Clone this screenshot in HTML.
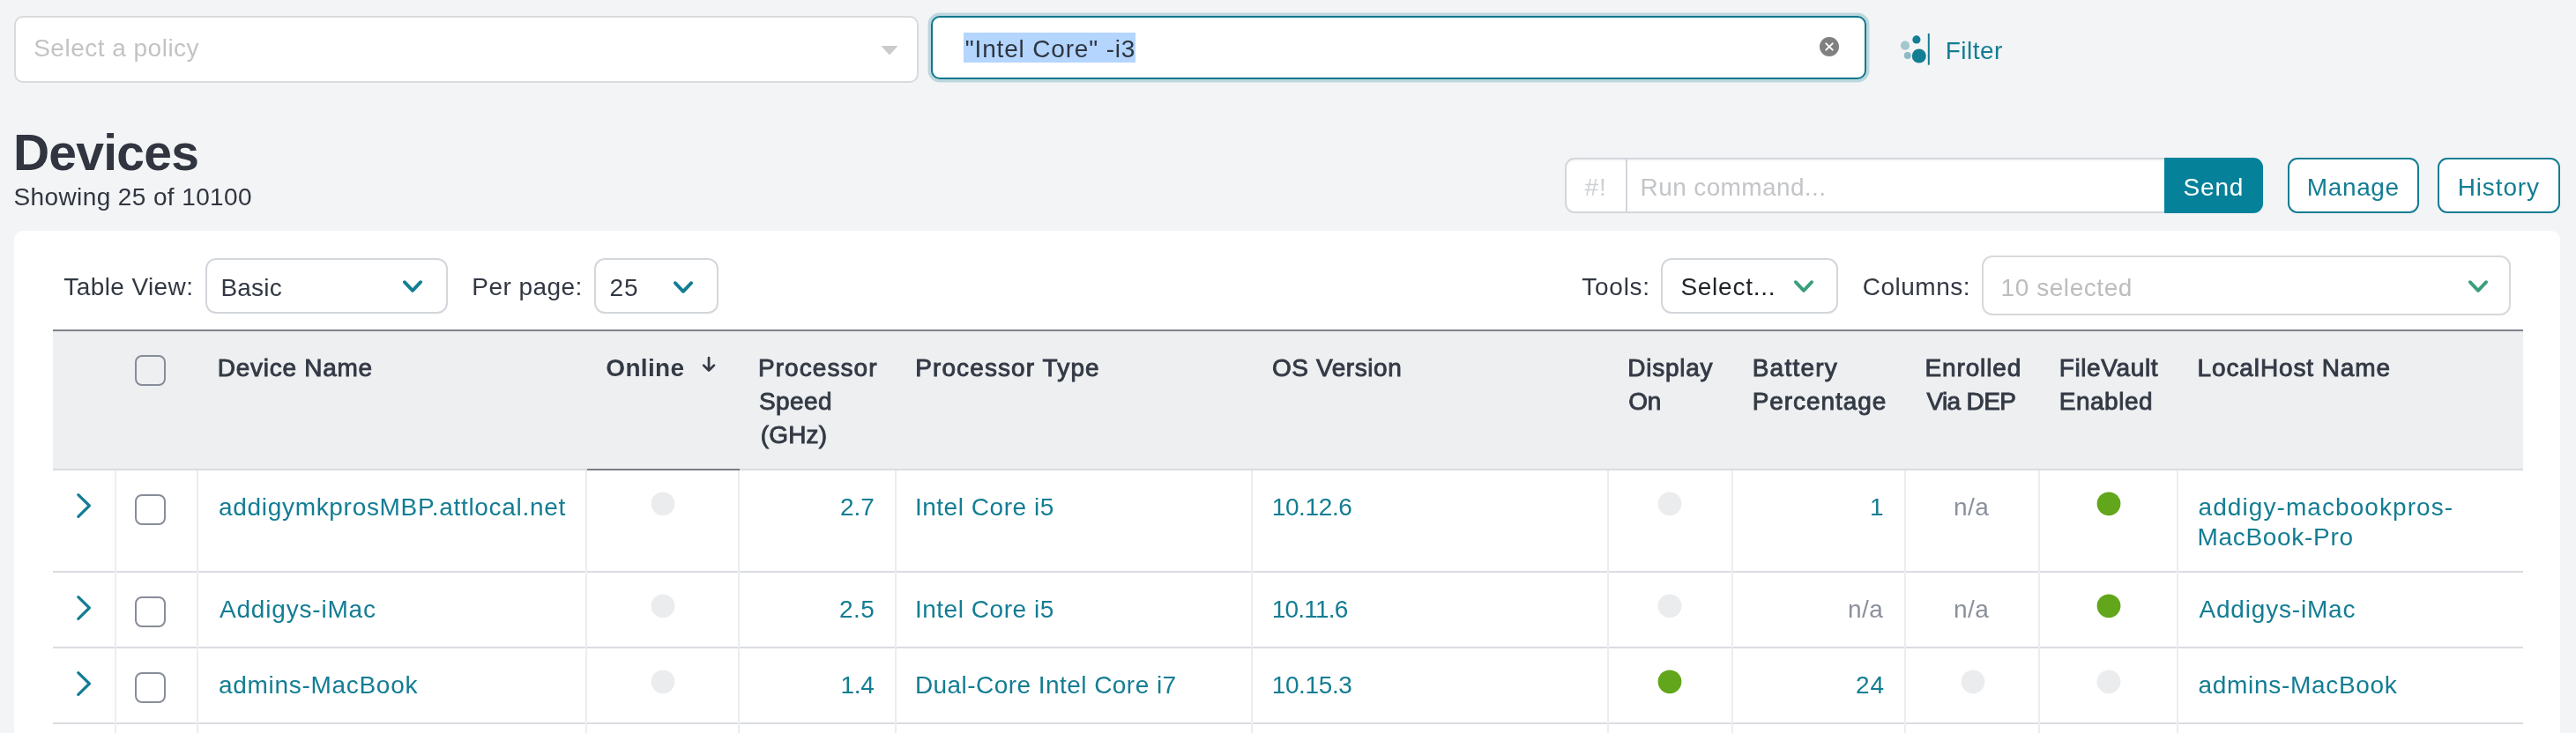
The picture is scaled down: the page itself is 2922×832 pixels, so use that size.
<!DOCTYPE html>
<html><head><meta charset="utf-8"><title>Devices</title>
<style>
*{box-sizing:border-box;margin:0;padding:0}
html,body{width:2922px;height:832px;overflow:hidden;background:#f3f4f6;font-family:"Liberation Sans",sans-serif}
.a{position:absolute}
.t{position:absolute;white-space:pre;line-height:1;font-size:28px}
.sel{position:absolute;background:#fff;border:2px solid #d3d6db;border-radius:12px}
.vs{position:absolute;width:2px;background:#ebedf0;top:534px;height:298px}
.hs{position:absolute;left:60px;width:2802px;height:2px;background:#d9dce0}
.dot{position:absolute;width:27px;height:27px;border-radius:50%;background:#ebecee}
.dot.g{background:#62a61b}
.cb{position:absolute;left:153px;width:35px;height:35px;border:2px solid #878d98;border-radius:8px;background:#fff}
svg{position:absolute;overflow:visible}
#root{position:absolute;left:0;top:0;width:2922px;height:832px;overflow:hidden;will-change:transform}
</style></head>
<body><div id="root">
<div class="a" style="left:16px;top:18px;width:1026px;height:76px;background:#fff;border:2px solid #dadadc;border-radius:10px"></div>
<svg style="left:1000px;top:52px" width="18" height="10" viewBox="0 0 18 10"><path d="M0.9 0 H17.1 Q18.3 0.2 17.5 1.2 L9.7 9.8 Q9 10.5 8.3 9.8 L0.5 1.2 Q-0.3 0.2 0.9 0 Z" fill="#cbcbcb"/></svg>
<div class="a" style="left:1055.5px;top:18px;width:1061px;height:72px;background:#fff;border:2px solid #0c788d;border-radius:10px;box-shadow:0 0 0 3.5px rgba(12,120,141,.23)"></div>
<div class="a" style="left:1093px;top:37px;width:195px;height:34px;background:#b4d5fe"></div>
<svg style="left:2064px;top:42px" width="22" height="22" viewBox="0 0 22 22"><circle cx="11" cy="11" r="11" fill="#808080"/><path d="M7.3 7.3 L14.7 14.7 M14.7 7.3 L7.3 14.7" stroke="#fff" stroke-width="1.9" stroke-linecap="round"/></svg>
<svg style="left:2150px;top:36px" width="44" height="40" viewBox="2150 36 44 40"><circle cx="2161" cy="51.7" r="5.1" fill="#a3c6cf"/><circle cx="2163.8" cy="62.9" r="4" fill="#8fbac5"/><circle cx="2173.9" cy="44.9" r="4.6" fill="#137d93"/><circle cx="2176.8" cy="63.5" r="8" fill="#137d93"/><rect x="2186.8" y="38" width="2" height="35.7" fill="#137d93"/></svg>
<div class="a" style="left:1775px;top:179px;width:692px;height:63px;background:#fff;border:2px solid #d3d6db;border-radius:11px 0 0 11px;box-shadow:inset 0 2px 3px rgba(0,0,0,.04)"></div>
<div class="a" style="left:1844px;top:181px;width:2px;height:59px;background:#d3d6db"></div>
<div class="a" style="left:2455px;top:179px;width:112px;height:63px;background:#06819a;border-radius:0 11px 11px 0"></div>
<div class="a" style="left:2595px;top:179px;width:149px;height:63px;background:#fff;border:2px solid #137d93;border-radius:11px"></div>
<div class="a" style="left:2765px;top:179px;width:139px;height:63px;background:#fff;border:2px solid #137d93;border-radius:11px"></div>
<div class="a" style="left:16px;top:262px;width:2888px;height:570px;background:#fff;border-radius:10px 10px 0 0"></div>
<div class="sel" style="left:233px;top:293px;width:275px;height:63px"></div>
<div class="sel" style="left:674px;top:293px;width:141px;height:63px"></div>
<div class="sel" style="left:1884px;top:293px;width:201px;height:63px"></div>
<div class="sel" style="left:2248px;top:290px;width:600px;height:68px;border-color:#d9d9d9"></div>
<svg style="left:456px;top:317.15px" width="24" height="16" viewBox="-12 -8 24 16"><path d="M-9.15 -4.85 L0 4.85 L9.15 -4.85" fill="none" stroke="#137d93" stroke-width="3.8" stroke-linecap="round" stroke-linejoin="round"/></svg>
<svg style="left:763px;top:317.5px" width="24" height="16" viewBox="-12 -8 24 16"><path d="M-9.15 -4.85 L0 4.85 L9.15 -4.85" fill="none" stroke="#137d93" stroke-width="3.8" stroke-linecap="round" stroke-linejoin="round"/></svg>
<svg style="left:2033.6px;top:317px" width="24" height="16" viewBox="-12 -8 24 16"><path d="M-9.15 -4.85 L0 4.85 L9.15 -4.85" fill="none" stroke="#3a9e7d" stroke-width="3.8" stroke-linecap="round" stroke-linejoin="round"/></svg>
<svg style="left:2799.4px;top:316.7px" width="24" height="16" viewBox="-12 -8 24 16"><path d="M-9.15 -4.85 L0 4.85 L9.15 -4.85" fill="none" stroke="#3a9e7d" stroke-width="3.8" stroke-linecap="round" stroke-linejoin="round"/></svg>
<div class="a" style="left:60px;top:376px;width:2802px;height:156px;background:#edeff1"></div>
<div class="a" style="left:60px;top:374px;width:2802px;height:2px;background:#7c818c"></div>
<div class="hs" style="top:532px"></div>
<div class="hs" style="top:648px"></div>
<div class="hs" style="top:734px"></div>
<div class="hs" style="top:820px"></div>
<div class="a" style="left:666px;top:532px;width:173px;height:2px;background:#787d87"></div>
<div class="vs" style="left:130px"></div>
<div class="vs" style="left:223px"></div>
<div class="vs" style="left:664px"></div>
<div class="vs" style="left:837px"></div>
<div class="vs" style="left:1015px"></div>
<div class="vs" style="left:1419px"></div>
<div class="vs" style="left:1823px"></div>
<div class="vs" style="left:1964px"></div>
<div class="vs" style="left:2160px"></div>
<div class="vs" style="left:2312px"></div>
<div class="vs" style="left:2469px"></div>
<div class="cb" style="top:403px;background:transparent"></div>
<svg style="left:790px;top:400px" width="30" height="30" viewBox="790 400 30 30"><path d="M804.05 406.1 V420.5 M798.1 414.6 L804.05 420.5 L810 414.6" fill="none" stroke="#343a45" stroke-width="2.7" stroke-linecap="round" stroke-linejoin="round"/></svg>
<svg style="left:84px;top:558.3px" width="22" height="32" viewBox="-11 -16 22 32"><path d="M-6.2 -12.4 L6.4 0 L-6.2 12.4" fill="none" stroke="#137d93" stroke-width="3.2" stroke-linecap="round" stroke-linejoin="round"/></svg>
<div class="cb" style="top:561.3px"></div>
<svg style="left:84px;top:674.3px" width="22" height="32" viewBox="-11 -16 22 32"><path d="M-6.2 -12.4 L6.4 0 L-6.2 12.4" fill="none" stroke="#137d93" stroke-width="3.2" stroke-linecap="round" stroke-linejoin="round"/></svg>
<div class="cb" style="top:677.3px"></div>
<svg style="left:84px;top:760.3px" width="22" height="32" viewBox="-11 -16 22 32"><path d="M-6.2 -12.4 L6.4 0 L-6.2 12.4" fill="none" stroke="#137d93" stroke-width="3.2" stroke-linecap="round" stroke-linejoin="round"/></svg>
<div class="cb" style="top:763.3px"></div>
<svg style="left:0;top:0" width="2922" height="832" viewBox="0 0 2922 832"><circle cx="752" cy="571.8" r="13.4" fill="#ebecee"/><circle cx="752" cy="687.8" r="13.4" fill="#ebecee"/><circle cx="752" cy="773.8" r="13.4" fill="#ebecee"/><circle cx="1894" cy="571.8" r="13.4" fill="#ebecee"/><circle cx="1894" cy="687.8" r="13.4" fill="#ebecee"/><circle cx="1894" cy="773.8" r="13.4" fill="#62a61b"/><circle cx="2238" cy="773.8" r="13.4" fill="#ebecee"/><circle cx="2392" cy="571.8" r="13.4" fill="#62a61b"/><circle cx="2392" cy="687.8" r="13.4" fill="#62a61b"/><circle cx="2392" cy="773.8" r="13.4" fill="#ebecee"/></svg>
<span class="t" style="left:38.2px;top:41.2px;font-size:28px;color:#c3c3c4;letter-spacing:0.49px;">Select a policy</span>
<span class="t" style="left:1094.8px;top:41.7px;font-size:28px;color:#2e3540;letter-spacing:0.83px;">&quot;Intel Core&quot; -i3</span>
<span class="t" style="left:2206.8px;top:43.8px;font-size:28px;color:#137d93;letter-spacing:0.44px;">Filter</span>
<span class="t" style="left:14.9px;top:144.8px;font-size:57px;color:#30353f;font-weight:700;letter-spacing:-0.75px;">Devices</span>
<span class="t" style="left:15.5px;top:209.9px;font-size:28px;color:#30353f;letter-spacing:0.39px;">Showing 25 of 10100</span>
<span class="t" style="left:1797.5px;top:199.0px;font-size:28px;color:#cdd0d5;letter-spacing:1.00px;">#!</span>
<span class="t" style="left:1860.6px;top:198.7px;font-size:28px;color:#c3c5c8;letter-spacing:0.38px;">Run command...</span>
<span class="t" style="left:2476.6px;top:199.0px;font-size:28px;color:#ffffff;letter-spacing:0.80px;">Send</span>
<span class="t" style="left:2616.8px;top:199.0px;font-size:28px;color:#137d93;letter-spacing:0.62px;">Manage</span>
<span class="t" style="left:2787.7px;top:199.0px;font-size:28px;color:#137d93;letter-spacing:0.87px;">History</span>
<span class="t" style="left:72.3px;top:312.0px;font-size:28px;color:#323843;letter-spacing:0.40px;">Table View:</span>
<span class="t" style="left:250.4px;top:312.5px;font-size:28px;color:#323843;letter-spacing:0.20px;">Basic</span>
<span class="t" style="left:535.3px;top:312.2px;font-size:28px;color:#323843;letter-spacing:0.46px;">Per page:</span>
<span class="t" style="left:691.4px;top:312.5px;font-size:28px;color:#323843;letter-spacing:1.00px;">25</span>
<span class="t" style="left:1794.3px;top:312.0px;font-size:28px;color:#323843;letter-spacing:0.74px;">Tools:</span>
<span class="t" style="left:1906.4px;top:312.0px;font-size:28px;color:#20242a;letter-spacing:0.74px;">Select...</span>
<span class="t" style="left:2112.7px;top:312.0px;font-size:28px;color:#323843;letter-spacing:0.51px;">Columns:</span>
<span class="t" style="left:2269.5px;top:312.9px;font-size:28px;color:#bdbdbd;letter-spacing:0.57px;">10 selected</span>
<span class="t" style="left:246.8px;top:403.8px;font-size:28px;color:#343a45;letter-spacing:0.72px;-webkit-text-stroke:0.9px #343a45;">Device Name</span>
<span class="t" style="left:687.3px;top:403.8px;font-size:28px;color:#343a45;font-weight:700;letter-spacing:0.34px;">Online</span>
<span class="t" style="left:859.9px;top:403.8px;font-size:28px;color:#343a45;letter-spacing:1.08px;-webkit-text-stroke:0.9px #343a45;">Processor</span>
<span class="t" style="left:860.9px;top:441.9px;font-size:28px;color:#343a45;letter-spacing:0.45px;-webkit-text-stroke:0.9px #343a45;">Speed</span>
<span class="t" style="left:862.8px;top:479.6px;font-size:28px;color:#343a45;letter-spacing:0.15px;-webkit-text-stroke:0.9px #343a45;">(GHz)</span>
<span class="t" style="left:1038.2px;top:403.8px;font-size:28px;color:#343a45;letter-spacing:1.11px;-webkit-text-stroke:0.9px #343a45;">Processor Type</span>
<span class="t" style="left:1443.0px;top:403.8px;font-size:28px;color:#343a45;letter-spacing:0.58px;-webkit-text-stroke:0.9px #343a45;">OS Version</span>
<span class="t" style="left:1846.3px;top:403.8px;font-size:28px;color:#343a45;letter-spacing:0.75px;-webkit-text-stroke:0.9px #343a45;">Display</span>
<span class="t" style="left:1847.3px;top:441.9px;font-size:28px;color:#343a45;letter-spacing:-0.30px;-webkit-text-stroke:0.9px #343a45;">On</span>
<span class="t" style="left:1987.7px;top:403.8px;font-size:28px;color:#343a45;letter-spacing:1.23px;-webkit-text-stroke:0.9px #343a45;">Battery</span>
<span class="t" style="left:1987.7px;top:441.9px;font-size:28px;color:#343a45;letter-spacing:0.94px;-webkit-text-stroke:0.9px #343a45;">Percentage</span>
<span class="t" style="left:2183.6px;top:403.8px;font-size:28px;color:#343a45;letter-spacing:0.84px;-webkit-text-stroke:0.9px #343a45;">Enrolled</span>
<span class="t" style="left:2185.6px;top:441.9px;font-size:28px;color:#343a45;letter-spacing:-0.68px;-webkit-text-stroke:0.9px #343a45;">Via DEP</span>
<span class="t" style="left:2335.7px;top:403.8px;font-size:28px;color:#343a45;letter-spacing:0.62px;-webkit-text-stroke:0.9px #343a45;">FileVault</span>
<span class="t" style="left:2335.7px;top:441.9px;font-size:28px;color:#343a45;letter-spacing:0.53px;-webkit-text-stroke:0.9px #343a45;">Enabled</span>
<span class="t" style="left:2492.5px;top:403.8px;font-size:28px;color:#343a45;letter-spacing:0.89px;-webkit-text-stroke:0.9px #343a45;">LocalHost Name</span>
<span class="t" style="left:248.0px;top:561.8px;font-size:28px;color:#137d93;letter-spacing:0.69px;">addigymkprosMBP.attlocal.net</span>
<span class="t" style="left:249.0px;top:677.7px;font-size:28px;color:#137d93;letter-spacing:0.81px;">Addigys-iMac</span>
<span class="t" style="left:248.0px;top:763.8px;font-size:28px;color:#137d93;letter-spacing:0.70px;">admins-MacBook</span>
<span class="t" style="left:953.0px;top:561.8px;font-size:28px;color:#137d93;">2.7</span>
<span class="t" style="left:952.0px;top:677.7px;font-size:28px;color:#137d93;letter-spacing:0.50px;">2.5</span>
<span class="t" style="left:953.6px;top:763.8px;font-size:28px;color:#137d93;letter-spacing:-0.30px;">1.4</span>
<span class="t" style="left:1037.9px;top:561.8px;font-size:28px;color:#137d93;letter-spacing:0.53px;">Intel Core i5</span>
<span class="t" style="left:1037.9px;top:677.7px;font-size:28px;color:#137d93;letter-spacing:0.53px;">Intel Core i5</span>
<span class="t" style="left:1037.9px;top:763.8px;font-size:28px;color:#137d93;letter-spacing:0.45px;">Dual-Core Intel Core i7</span>
<span class="t" style="left:1442.7px;top:561.8px;font-size:28px;color:#137d93;letter-spacing:-0.37px;">10.12.6</span>
<span class="t" style="left:1442.7px;top:677.7px;font-size:28px;color:#137d93;letter-spacing:-0.78px;">10.11.6</span>
<span class="t" style="left:1442.7px;top:763.8px;font-size:28px;color:#137d93;letter-spacing:-0.37px;">10.15.3</span>
<span class="t" style="left:2121.0px;top:561.8px;font-size:28px;color:#137d93;">1</span>
<span class="t" style="left:2096.0px;top:677.7px;font-size:28px;color:#8a909b;letter-spacing:0.50px;">n/a</span>
<span class="t" style="left:2105.0px;top:763.8px;font-size:28px;color:#137d93;letter-spacing:1.00px;">24</span>
<span class="t" style="left:2216.0px;top:561.8px;font-size:28px;color:#8a909b;letter-spacing:0.50px;">n/a</span>
<span class="t" style="left:2216.0px;top:677.7px;font-size:28px;color:#8a909b;letter-spacing:0.50px;">n/a</span>
<span class="t" style="left:2493.5px;top:561.8px;font-size:28px;color:#137d93;letter-spacing:1.08px;">addigy-macbookpros-</span>
<span class="t" style="left:2492.5px;top:595.8px;font-size:28px;color:#137d93;letter-spacing:0.69px;">MacBook-Pro</span>
<span class="t" style="left:2494.5px;top:677.7px;font-size:28px;color:#137d93;letter-spacing:0.81px;">Addigys-iMac</span>
<span class="t" style="left:2493.5px;top:763.8px;font-size:28px;color:#137d93;letter-spacing:0.69px;">admins-MacBook</span>
</div></body></html>
